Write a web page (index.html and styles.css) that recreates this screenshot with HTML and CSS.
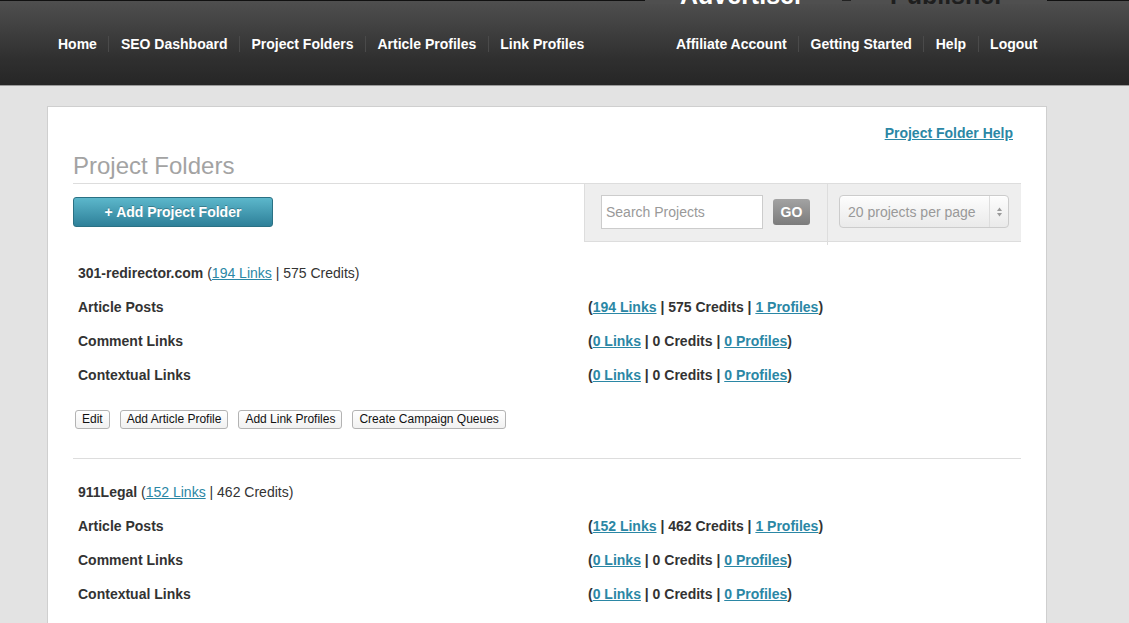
FILE: index.html
```html
<!DOCTYPE html>
<html>
<head>
<meta charset="utf-8">
<title>Project Folders</title>
<link rel="stylesheet" href="styles.css">
</head>
<body>
<header class="header">
  <div class="tabs">
    <span class="tab tab-adv">Advertiser</span>
    <span class="tab-dash"></span>
    <span class="tab tab-pub">Publisher</span>
  </div>
  <nav class="nav nav-left">
    <a href="#">Home</a>
    <a href="#">SEO Dashboard</a>
    <a href="#">Project Folders</a>
    <a href="#">Article Profiles</a>
    <a href="#">Link Profiles</a>
  </nav>
  <nav class="nav nav-right">
    <a href="#">Affiliate Account</a>
    <a href="#">Getting Started</a>
    <a href="#">Help</a>
    <a href="#">Logout</a>
  </nav>
</header>

<main class="card">
  <div class="help-row"><a class="link help" href="#">Project Folder Help</a></div>
  <h1 class="title">Project Folders</h1>
  <div class="toolbar">
    <div class="toolbar-left">
      <button class="add-btn">+ Add Project Folder</button>
    </div>
    <div class="toolbar-right">
      <div class="search-cell">
        <input class="search" type="text" placeholder="Search Projects">
        <button class="go">GO</button>
      </div>
      <div class="select-cell">
        <div class="select">
          <span class="select-text">20 projects per page</span>
          <span class="select-arrows">
            <svg width="7" height="12" viewBox="0 0 7 12"><path d="M3.5 1.5 L6 5 L1 5 Z" fill="#9a9a9a"/><path d="M3.5 10.5 L6 7 L1 7 Z" fill="#9a9a9a"/></svg>
          </span>
        </div>
      </div>
    </div>
  </div>

  <section class="project">
    <div class="ptitle"><b>301-redirector.com</b> (<a class="link" href="#">194 Links</a> | 575 Credits)</div>
    <div class="prow"><span class="plabel">Article Posts</span><span class="pval">(<a class="link" href="#">194 Links</a> | 575 Credits | <a class="link" href="#">1 Profiles</a>)</span></div>
    <div class="prow"><span class="plabel">Comment Links</span><span class="pval">(<a class="link" href="#">0 Links</a> | 0 Credits | <a class="link" href="#">0 Profiles</a>)</span></div>
    <div class="prow"><span class="plabel">Contextual Links</span><span class="pval">(<a class="link" href="#">0 Links</a> | 0 Credits | <a class="link" href="#">0 Profiles</a>)</span></div>
    <div class="actions">
      <button class="small-btn">Edit</button>
      <button class="small-btn">Add Article Profile</button>
      <button class="small-btn">Add Link Profiles</button>
      <button class="small-btn">Create Campaign Queues</button>
    </div>
  </section>

  <section class="project">
    <div class="ptitle"><b>911Legal</b> (<a class="link" href="#">152 Links</a> | 462 Credits)</div>
    <div class="prow"><span class="plabel">Article Posts</span><span class="pval">(<a class="link" href="#">152 Links</a> | 462 Credits | <a class="link" href="#">1 Profiles</a>)</span></div>
    <div class="prow"><span class="plabel">Comment Links</span><span class="pval">(<a class="link" href="#">0 Links</a> | 0 Credits | <a class="link" href="#">0 Profiles</a>)</span></div>
    <div class="prow"><span class="plabel">Contextual Links</span><span class="pval">(<a class="link" href="#">0 Links</a> | 0 Credits | <a class="link" href="#">0 Profiles</a>)</span></div>
    <div class="actions">
      <button class="small-btn">Edit</button>
      <button class="small-btn">Add Article Profile</button>
      <button class="small-btn">Add Link Profiles</button>
      <button class="small-btn">Create Campaign Queues</button>
    </div>
  </section>
</main>
</body>
</html>
```

FILE: styles.css
```css
html, body {
  margin: 0;
  padding: 0;
}
body {
  background: #e3e3e3;
  font-family: "Liberation Sans", Arial, Helvetica, sans-serif;
  font-size: 14px;
  color: #333;
  overflow: hidden;
}
.header {
  position: relative;
  height: 84px;
  background: linear-gradient(#4f4f4f, #2f2f2f 70%, #262626);
  border-top: 1px solid #111;
  border-bottom: 1px solid #9a9a9a;
  display: flex;
  align-items: center;
  justify-content: space-between;
  padding: 0 80px 0 46px;
}
.tabs {
  position: absolute;
  top: -1px;
  left: 645px;
  width: 402px;
  height: 4px;
  background: #4f4f4f;
  overflow: hidden;
}
.tab {
  position: absolute;
  top: -18px;
  font-size: 25px;
  line-height: 26px;
  font-weight: bold;
  white-space: nowrap;
}
.tab-adv { left: 35px; color: #fff; }
.tab-pub { left: 245px; color: #1e1e1e; }
.tab-dash {
  position: absolute;
  top: 0;
  left: 197px;
  width: 9px;
  height: 1px;
  background: #222;
}
.nav {
  display: flex;
  align-items: center;
  margin-top: 1px;
}
.nav a {
  color: #fff;
  font-weight: bold;
  font-size: 14px;
  text-decoration: none;
  padding: 0 11.5px;
  line-height: 16px;
  border-left: 1px solid #4a4a4a;
}
.nav a:first-child { border-left: none; }
.nav-left a:first-child { padding-left: 12px; }

.card {
  margin: 20px 0 0 47px;
  width: 948px;
  min-height: 600px;
  background: #fff;
  border: 1px solid #cfcfcf;
  padding: 0 25px 0 25px;
}
.help-row {
  display: flex;
  justify-content: flex-end;
  padding: 17px 8px 0 0;
  height: 20px;
}
.link {
  color: #2b87a5;
  text-decoration: underline;
}
.help {
  font-weight: bold;
  font-size: 14px;
  line-height: 18px;
}
.title {
  margin: 0;
  font-size: 24px;
  font-weight: normal;
  color: #a3a3a3;
  line-height: 28px;
  padding: 8px 0 3px;
  border-bottom: 1px solid #ddd;
}
.toolbar {
  display: flex;
  justify-content: space-between;
  height: 58px;
}
.toolbar-left {
  padding-top: 13px;
}
.add-btn {
  width: 200px;
  height: 30px;
  border: 1px solid #2a7184;
  border-radius: 3px;
  background: linear-gradient(#5cb7cb, #2e8099);
  color: #fff;
  font-family: "Liberation Sans", Arial, sans-serif;
  font-weight: bold;
  font-size: 14px;
  text-shadow: 0 -1px 0 rgba(0,0,0,0.25);
  cursor: pointer;
}
.toolbar-right {
  display: flex;
  width: 437px;
  background: #eee;
  border-left: 1px solid #ddd;
  border-bottom: 1px solid #ddd;
  box-sizing: border-box;
  height: 58px;
}
.search-cell {
  width: 243px;
  box-sizing: border-box;
  border-right: 1px solid #ddd;
  display: flex;
  align-items: center;
  padding-left: 16px;
  gap: 10px;
  height: 61px;
  margin-bottom: -4px;
}
.search-cell, .select-cell { align-self: flex-start; }
.search {
  width: 162px;
  height: 34px;
  box-sizing: border-box;
  border: 1px solid #ccc;
  padding: 0 4px;
  font-family: "Liberation Sans", Arial, sans-serif;
  font-size: 14px;
  color: #333;
  margin-top: -5px;
  outline: none;
}
.search::placeholder { color: #999; }
.go {
  width: 37px;
  height: 26px;
  border: none;
  border-radius: 3px;
  background: linear-gradient(#a3a3a3, #7c7c7c);
  color: #fff;
  font-family: "Liberation Sans", Arial, sans-serif;
  font-weight: bold;
  font-size: 14px;
  padding: 0;
  margin-top: -5px;
}
.select-cell {
  flex: 1;
  display: flex;
  align-items: flex-start;
  padding: 11px 0 0 11px;
}
.select {
  width: 170px;
  height: 33px;
  box-sizing: border-box;
  border: 1px solid #ccc;
  border-radius: 4px;
  background: linear-gradient(#fdfdfd, #eaeaea);
  display: flex;
  align-items: center;
  box-shadow: inset 0 1px 0 #fff;
}
.select-text {
  flex: 1;
  padding-left: 8px;
  color: #999;
  font-size: 14px;
  white-space: nowrap;
}
.select-arrows {
  width: 18px;
  height: 31px;
  border-left: 1px solid #ddd;
  display: flex;
  align-items: center;
  justify-content: center;
}
.project {
  padding: 14px 0 30px;
  border-bottom: 1px solid #ddd;
}
.project + .project { padding-top: 16px; }
.ptitle, .prow {
  height: 34px;
  line-height: 34px;
  padding-left: 5px;
}
.ptitle { font-size: 14px; }
.prow {
  display: grid;
  grid-template-columns: 510px 1fr;
  font-weight: bold;
}
.actions {
  display: flex;
  gap: 10px;
  margin-top: 18px;
  padding-left: 2px;
}
.small-btn {
  height: 19px;
  padding: 0 6px;
  border: 1px solid #b3b3b3;
  border-radius: 3px;
  background: linear-gradient(#fff, #f1f1f1);
  font-family: "Liberation Sans", Arial, sans-serif;
  font-size: 12px;
  color: #111;
  line-height: 17px;
}
.actions + * { margin: 0; }
.project:first-of-type { padding-bottom: 29px; }
```
